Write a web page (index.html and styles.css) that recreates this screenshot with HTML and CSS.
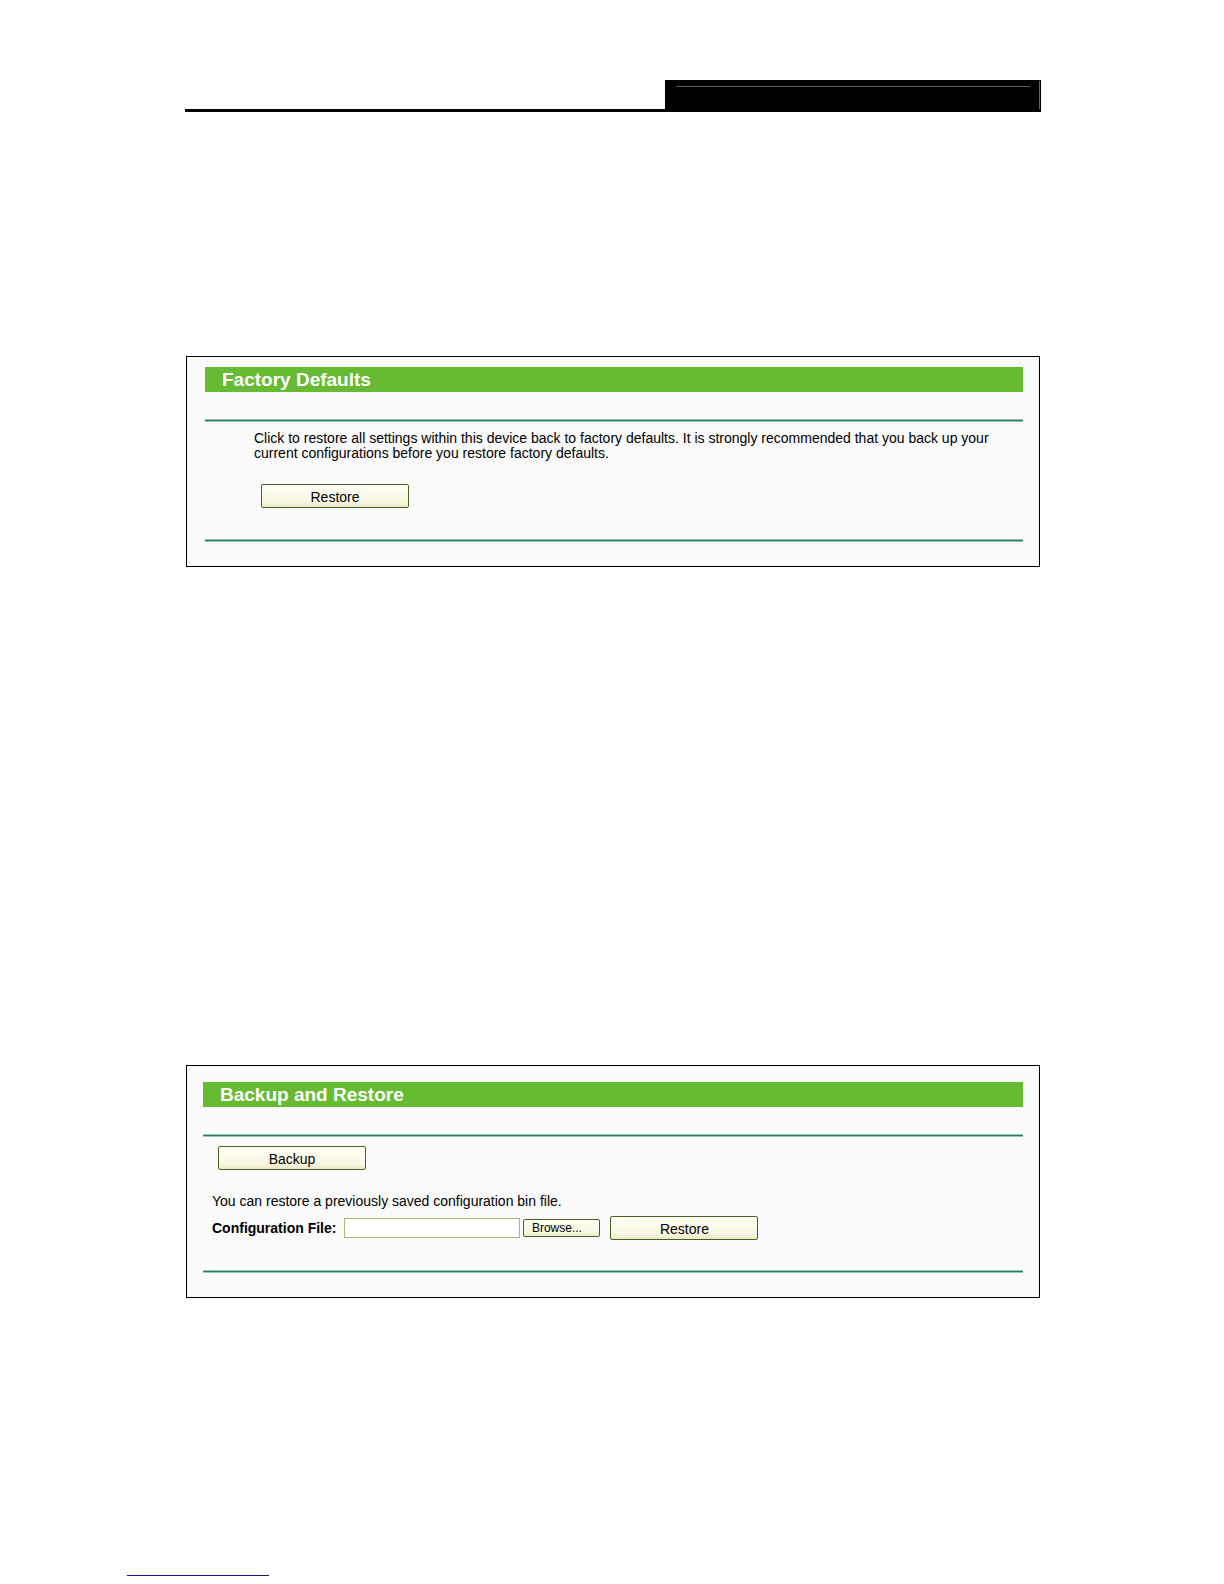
FILE: index.html
```
<!DOCTYPE html>
<html lang="en">
    <head>
        <meta charset="utf-8">
        <title>Factory Defaults / Backup and Restore</title>
        <link rel="stylesheet" href="styles.css">
    </head>

    <body>
        <header class="page-header">
            <div class="header-tab"></div>
        </header>

        <main>
            <section class="panel panel-defaults">
                <h2 class="panel-title">Factory Defaults</h2>
                <hr class="rule">
                <div class="panel-body">
                    <p class="text">Click to restore all settings within this device back to factory defaults. It is strongly recommended that you back up your current configurations before you restore factory defaults.</p>
                    <button type="button" class="btn">Restore</button>
                </div>
                <hr class="rule">
            </section>

            <section class="panel panel-backup">
                <h2 class="panel-title">Backup and Restore</h2>
                <hr class="rule">
                <form class="panel-body">
                    <button type="button" class="btn">Backup</button>
                    <p class="text">You can restore a previously saved configuration bin file.</p>
                    <div class="file-row">
                        <label for="filename">Configuration File:</label>
                        <input type="text" class="textbox" id="filename">
                        <button type="button" class="btn btn-sm">Browse...</button>
                        <button type="button" class="btn">Restore</button>
                    </div>
                </form>
                <hr class="rule">
            </section>
        </main>

        <footer class="page-footer">
            <hr class="footer-line">
        </footer>
    </body>
</html>
```

FILE: styles.css
```
* {
    box-sizing: border-box;
}

body {
    margin: 0;
    padding-top: 80px;
    background-color: #fff;
    color: #000;
    font-family: "Liberation Sans", Arial, sans-serif;
    font-size: 14px;
    line-height: 15px;
}

.page-header {
    display: flex;
    justify-content: flex-end;
    margin: 0 183px 0 185px;
    border-bottom: 3px solid #000;
}

.header-tab {
    width: 376px;
    max-width: 100%;
    height: 29px;
    padding: 5px 10px 0 11px;
    background-color: #000;
    border-top: 1px solid #000;
    border-right: 1px solid #000;
    box-shadow: inset -1px 0 0 #666;
}

.header-tab::before {
    content: "";
    display: block;
    height: 1px;
    background-color: #5a5a5a;
}

main {
    margin: 0 184px 0 186px;
}

.panel {
    border: 1px solid #000;
    background-color: #fafafa;
}

.panel-title {
    margin: 0 0 27px;
    padding: 0 17px;
    background-color: #66bb33;
    color: #fff;
    font-size: 19px;
    line-height: 25px;
}

.rule {
    height: 3px;
    margin: 0;
    border: solid #94c8b5;
    border-width: 1px 0;
    background-color: #2d7a60;
}

.text {
    margin: 0;
}

.panel-defaults {
    margin-top: 244px;
    padding: 10px 16px 24px 18px;
}

.panel-defaults .panel-body {
    padding: 9px 30px 31px 49px;
}

.panel-defaults .btn {
    margin: 23px 0 0 7px;
}

.panel-backup {
    margin-top: 498px;
    padding: 16px 16px 24px;
}

.panel-backup .panel-body {
    padding: 9px 9px 30px;
}

.panel-backup .panel-body > .btn {
    margin: 0 0 24px 6px;
}

.file-row {
    display: flex;
    align-items: center;
    flex-wrap: wrap;
    margin-top: 7px;
}

.file-row label {
    font-weight: bold;
}

.textbox {
    width: 176px;
    height: 20px;
    margin: 0 3px 0 8px;
    padding: 0 3px;
    border: 1px solid #a8b878;
    background-color: #fff;
    font: inherit;
}

.btn {
    display: block;
    width: 148px;
    height: 24px;
    padding: 2px 0 0;
    border: 1px solid #46621f;
    border-radius: 2px;
    background: linear-gradient(#fffff6, #f8f6df 80%, #ebe7c8);
    color: #000;
    font-family: inherit;
    font-size: 14px;
    line-height: 16px;
    text-align: center;
    cursor: pointer;
}

.btn-sm {
    width: 77px;
    height: 18px;
    margin-right: 10px;
    padding: 0 10px 0 0;
    font-size: 12px;
    line-height: 14px;
}

.page-footer {
    margin: 277px 127px 8px;
}

.footer-line {
    width: 142px;
    margin: 0;
    border: 0;
    border-top: 1px solid #141482;
}
```
